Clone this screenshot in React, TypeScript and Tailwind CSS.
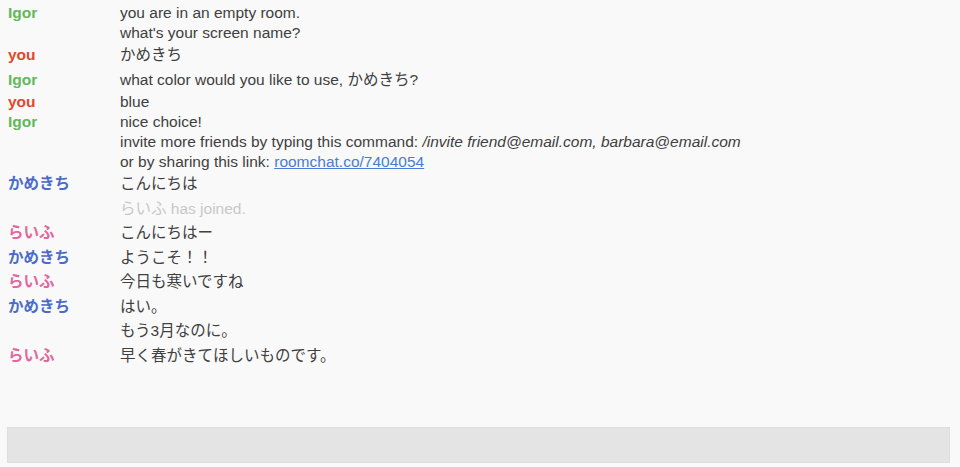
import React from "react";

type Line = { name?: string; color?: string; content: React.ReactNode; jp?: boolean; muted?: boolean };

const GREEN = "text-[#62b85a]";
const RED = "text-[#e2482a]";
const BLUE = "text-[#4a6cc9]";
const PINK = "text-[#e2679b]";

const lines: Line[] = [
  { name: "Igor", color: GREEN, content: "you are in an empty room." },
  { content: "what's your screen name?" },
  { name: "you", color: RED, content: "かめきち", jp: true },
  { name: "Igor", color: GREEN, content: "what color would you like to use, かめきち?", jp: true },
  { name: "you", color: RED, content: "blue" },
  { name: "Igor", color: GREEN, content: "nice choice!" },
  {
    content: (
      <>
        invite more friends by typing this command: <i>/invite friend@email.com, barbara@email.com</i>
      </>
    ),
  },
  {
    content: (
      <>
        or by sharing this link: <a className="text-[#4a7bd6] underline">roomchat.co/7404054</a>
      </>
    ),
  },
  { name: "かめきち", color: BLUE, content: "こんにちは", jp: true },
  { content: "らいふ has joined.", jp: true, muted: true },
  { name: "らいふ", color: PINK, content: "こんにちはー", jp: true },
  { name: "かめきち", color: BLUE, content: "ようこそ！！", jp: true },
  { name: "らいふ", color: PINK, content: "今日も寒いですね", jp: true },
  { name: "かめきち", color: BLUE, content: "はい。", jp: true },
  { content: "もう3月なのに。", jp: true },
  { name: "らいふ", color: PINK, content: "早く春がきてほしいものです。", jp: true },
];

export default function App() {
  return (
    <div
      className="h-screen w-full bg-[#f9f9f9] flex flex-col text-[15.5px] text-[#404040]"
      style={{ fontFamily: '"Liberation Sans", Arial, "Noto Sans CJK JP", sans-serif' }}
    >
      <div className="flex-1 pt-[3px]">
        {lines.map((l, i) => (
          <div key={i} className={`flex ${l.jp ? "leading-[24.5px]" : "leading-[20px]"}`}>
            <div className={`w-[120px] shrink-0 pl-[8px] font-bold ${l.color ?? ""}`}>{l.name ?? ""}</div>
            <div className={l.muted ? "text-[#c8c8c8]" : ""}>{l.content}</div>
          </div>
        ))}
      </div>
      <div className="mx-[7px] mr-[10px] mb-[4px] h-[36px] bg-[#e4e4e4] border border-[#dedede]" />
    </div>
  );
}
